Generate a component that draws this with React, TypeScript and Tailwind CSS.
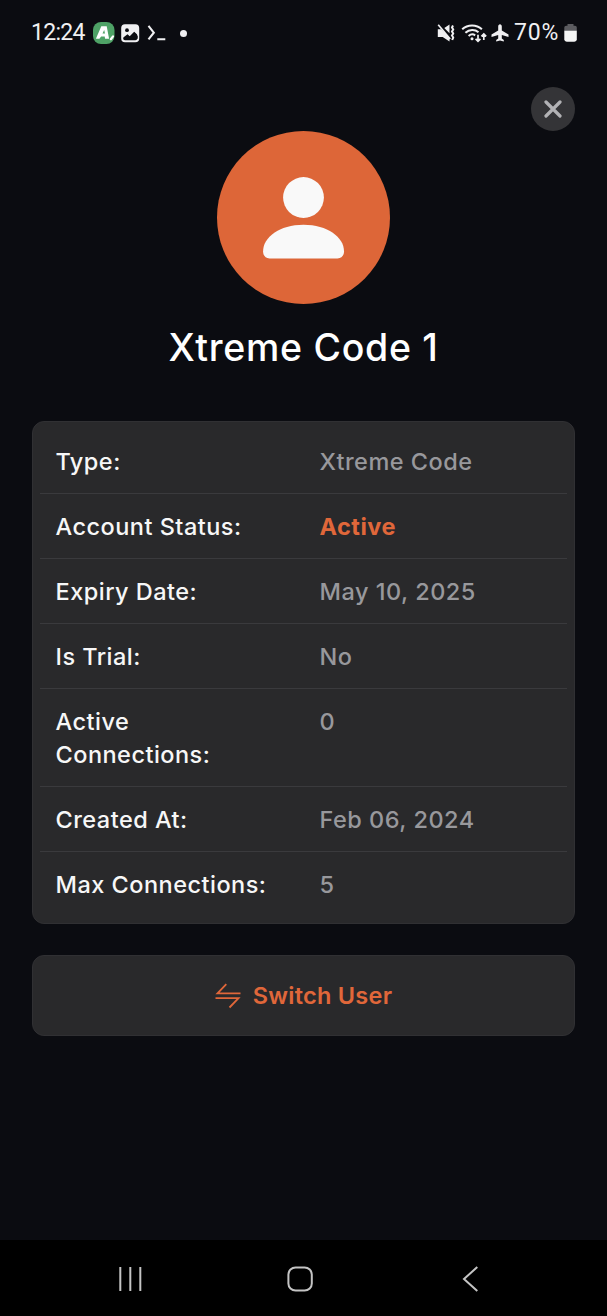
interface AccountRow {
  label: string;
  value: string;
  highlight?: boolean;
}

const rows: AccountRow[] = [
  { label: 'Type:', value: 'Xtreme Code' },
  { label: 'Account Status:', value: 'Active', highlight: true },
  { label: 'Expiry Date:', value: 'May 10, 2025' },
  { label: 'Is Trial:', value: 'No' },
  { label: 'Active Connections:', value: '0' },
  { label: 'Created At:', value: 'Feb 06, 2024' },
  { label: 'Max Connections:', value: '5' },
];

function StatusBar() {
  return (
    <div className="flex h-[66px] items-center justify-between pl-[31px] pr-[30px] font-[Roboto,sans-serif] text-[23px] text-[#f0f0f2]">
      <div className="flex items-center">
        <span className="mt-px w-[62px] tracking-[-0.7px]">12:24</span>
        <svg className="h-[22px] w-[22px]" viewBox="0 0 22 22" fill="none">
          <rect width="21.5" height="22" x="0" y="0" rx="8" fill="#4ea266" />
          <path d="M8.3 4.2h5.4l2.4 12.6h-4l-.4-2.3H8.1l-1.7 2.3H2.9Z" fill="#fff" />
          <path d="m11.2 8-1.7 3.5H12Z" fill="#4ea266" />
          <path d="m17.8 17.2 2.2-2.8" stroke="#fff" strokeWidth="2.2" strokeLinecap="round" />
        </svg>
        <svg className="ml-[6px] h-[19px] w-[19px]" viewBox="0 0 19 19" fill="none">
          <rect x="1.2" y="1.2" width="16" height="16" rx="2.8" stroke="#f0f0f2" strokeWidth="2" />
          <path d="M2 2h15v9.3l-3.8-3.6-4.5 4.5-2.2-1.9L2 13.8Z" fill="#f0f0f2" />
          <path d="m2.8 14.8 3.7-3.6 2.2 2 4.5-4.6 3.5 3.4v2.8Z" fill="#0b0c11" />
          <circle cx="6" cy="6.2" r="1.9" fill="#0b0c11" />
        </svg>
        <svg className="ml-[7px] h-[18px] w-[20px]" viewBox="0 0 20 18" fill="none" stroke="#f0f0f2" strokeWidth="2.1">
          <path d="M1.5 1.8 6.8 8.7l-5.3 6.6M10.3 15.2h8" />
        </svg>
        <span className="ml-[13px] h-[7px] w-[7px] rounded-full bg-[#f0f0f2]" />
      </div>
      <div className="flex items-center">
        <svg className="h-[20px] w-[20px]" viewBox="0 0 20 20" fill="none">
          <path d="M.8 6.2H4L12.5 14.5V18.5L5.7 13.9H.8ZM12.5 1.5v8.7L7.3 5Z" fill="#f0f0f2" />
          <path d="m1.2 1.8 12 14.2" stroke="#f0f0f2" strokeWidth="1.7" />
          <path d="m16 2.5-1 2 1.2 2-1.2 2 1.2 2-1.2 2 1.2 2-1 2.5" stroke="#f0f0f2" strokeWidth="2" />
        </svg>
        <svg className="ml-[4px] h-[20px] w-[27px]" viewBox="0 0 27 20" fill="none" stroke="#f0f0f2" strokeWidth="2">
          <path d="M1.2 6.2c5.4-5.1 14.3-5.1 19.7 0M4.4 9.8c4-3.7 9.4-3.7 13.1-.6M7.6 13c2-1.8 4.5-2.1 6.6-.7" />
          <circle cx="11" cy="15.8" r="1.5" fill="#f0f0f2" stroke="none" />
          <path d="M17 11.8v6.5m-2.4-2.4 2.4 2.4 2.4-2.4M22.8 17v-6m-2.4 2.4 2.4-2.4 2.4 2.4" strokeWidth="1.7" />
        </svg>
        <svg className="ml-[3px] h-[18px] w-[18px]" viewBox="0 0 18 18" fill="#f0f0f2">
          <path d="M9 .3c1 0 1.8 1 1.8 2.2v4.1l6.7 4v2.4l-6.7-1.9v3.3l2 1.6v1.6L9 16.6l-3.8 1V16l2-1.6v-3.3L.5 13v-2.4l6.7-4V2.5C7.2 1.3 8 .3 9 .3Z" />
        </svg>
        <span className="ml-[5px] mt-px w-[50px] tracking-[0.8px]">70%</span>
        <svg className="h-[18px] w-[13px]" viewBox="0 0 13 18">
          <path d="M3.5 0h6v1.7H11a1.8 1.8 0 0 1 1.8 1.8V7H.3V3.5a1.8 1.8 0 0 1 1.8-1.8h1.4Z" fill="#5c5c60" />
          <path d="M.3 6.8h12.5v8.5a2.4 2.4 0 0 1-2.4 2.4H2.7a2.4 2.4 0 0 1-2.4-2.4Z" fill="#f5f5f5" />
        </svg>
      </div>
    </div>
  );
}

function NavigationBar() {
  return (
    <div className="grid h-[76px] grid-cols-[118px_170px_170px_1fr] items-center bg-black pb-[1px]">
      <span />
      <svg className="mt-[3px] h-[26px] w-[25px]" viewBox="0 0 25 26" stroke="#c4c4c4" strokeWidth="2">
        <path d="M2.3 1v24M12.3 1v24M22.3 1v24" />
      </svg>
      <svg className="-ml-[1px] mt-[3px] h-[26px] w-[27px]" viewBox="0 0 27 26" fill="none" stroke="#c4c4c4" strokeWidth="2">
        <rect x="1.4" y="1.4" width="23.4" height="23.2" rx="7.2" />
      </svg>
      <svg className="ml-[4px] mt-[3px] h-[26px] w-[17px]" viewBox="0 0 17 26" fill="none" stroke="#c4c4c4" strokeWidth="2">
        <path d="M15.3 1 2 13l13.3 12" />
      </svg>
    </div>
  );
}

export default function App() {
  return (
    <div className="flex h-[1316px] w-[607px] flex-col overflow-hidden bg-[#0b0c11] font-[Inter,sans-serif]">
      <StatusBar />

      <main className="flex flex-1 flex-col px-8 pt-[21px]">
        <button className="flex h-[44px] w-[44px] items-center justify-center self-end rounded-full bg-[#343437]" aria-label="Close">
          <svg className="h-[18px] w-[18px]" viewBox="0 0 18 18" stroke="#b2b2b5" strokeWidth="3.2" strokeLinecap="round">
            <path d="m2 2 14 14M16 2 2 16" />
          </svg>
        </button>

        <div className="flex h-[173px] w-[173px] items-center justify-center self-center rounded-full bg-[#dd6638]">
          <svg className="h-[82px] w-[82px]" viewBox="0.5 0.3 82 82" fill="#f9f9f9">
            <circle cx="41" cy="20.8" r="20.4" />
            <path d="M41 48C65 48 81.5 60.5 81.5 74.5C81.5 79 79 81.7 75 81.7H7C3 81.7 .6 79 .6 74.5C.6 60.5 17 48 41 48Z" />
          </svg>
        </div>

        <h1 className="mt-[19px] text-center text-[37.5px] font-medium leading-[50px] tracking-[0.7px] text-white">
          Xtreme Code 1
        </h1>

        <div className="mt-[48px] rounded-xl border border-[#303033] bg-[#29292b] p-[7px]">
          {rows.map((row) => (
            <div
              key={row.label}
              className="grid grid-cols-2 border-b border-[#3a3a3d] pt-[15.5px] pb-[15.5px] text-[23.5px] leading-[33px] tracking-[0.5px] last:border-b-0"
            >
              <span className="pl-[15.5px] pr-8 font-medium tracking-[0.48px] text-[#f7f7f7]">{row.label}</span>
              <span className={row.highlight ? 'pl-4 font-bold text-[#e0673a]' : 'pl-4 font-medium text-[#98989c]'}>
                {row.value}
              </span>
            </div>
          ))}
        </div>

        <button className="mt-[31px] flex h-[81px] items-center justify-center gap-3 rounded-xl border border-[#303033] bg-[#29292b] text-[23.5px] font-semibold tracking-[0.27px] text-[#e0673a]">
          <svg className="h-[26px] w-[26px]" viewBox="0 0 26 26" fill="none" stroke="currentColor" strokeWidth="1.8">
            <path d="M11.3 1.2 2.5 10.3H25.5M.5 15.2H23.5L14.5 24.5" />
          </svg>
          Switch User
        </button>
      </main>

      <NavigationBar />
    </div>
  );
}
